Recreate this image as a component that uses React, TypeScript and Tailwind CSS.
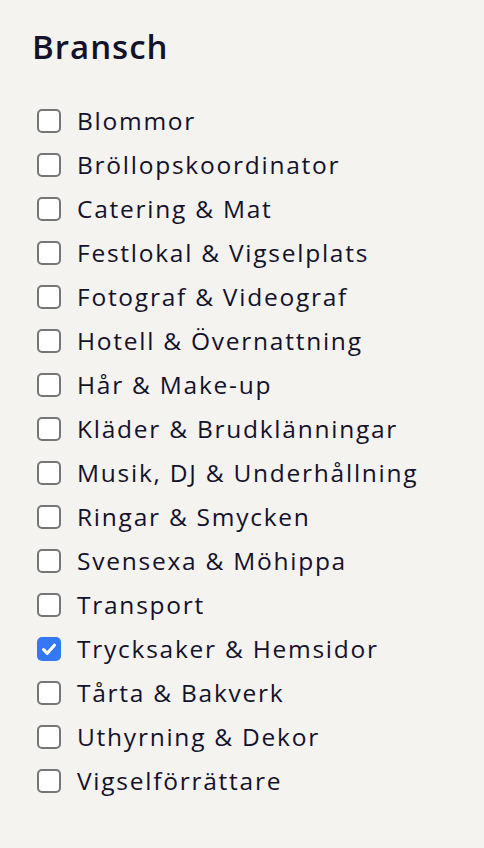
import React from "react";

const items: [string, boolean][] = [
  ["Blommor", false],
  ["Bröllopskoordinator", false],
  ["Catering & Mat", false],
  ["Festlokal & Vigselplats", false],
  ["Fotograf & Videograf", false],
  ["Hotell & Övernattning", false],
  ["Hår & Make-up", false],
  ["Kläder & Brudklänningar", false],
  ["Musik, DJ & Underhållning", false],
  ["Ringar & Smycken", false],
  ["Svensexa & Möhippa", false],
  ["Transport", false],
  ["Trycksaker & Hemsidor", true],
  ["Tårta & Bakverk", false],
  ["Uthyrning & Dekor", false],
  ["Vigselförrättare", false],
];

export default function App() {
  return (
    <div
      className="w-[484px] h-[848px] bg-[#f4f3f0] text-[#14112b] px-8 pt-[27px]"
      style={{ fontFamily: "'Open Sans', Inter, sans-serif" }}
    >
      <h2 className="text-[33px] leading-[40px] font-semibold tracking-[1px]">Bransch</h2>
      <ul className="mt-[32px] pl-[5px]">
        {items.map(([label, checked]) => (
          <li key={label} className="flex items-center h-[44px] gap-4">
            {checked ? (
              <span className="w-6 h-6 rounded-[5px] bg-[#3478f6] flex items-center justify-center shrink-0">
                <svg width="18" height="18" viewBox="0 0 16 16" fill="none">
                  <path d="M3.2 8.6 L6.5 11.8 L12.8 4.6" stroke="white" strokeWidth="2.8" strokeLinecap="round" strokeLinejoin="round" />
                </svg>
              </span>
            ) : (
              <span className="w-6 h-6 rounded-[5px] bg-white border-2 border-[#767676] shrink-0" />
            )}
            <span className="text-[24.5px] leading-[30px] font-medium tracking-[1.75px]">{label}</span>
          </li>
        ))}
      </ul>
    </div>
  );
}
